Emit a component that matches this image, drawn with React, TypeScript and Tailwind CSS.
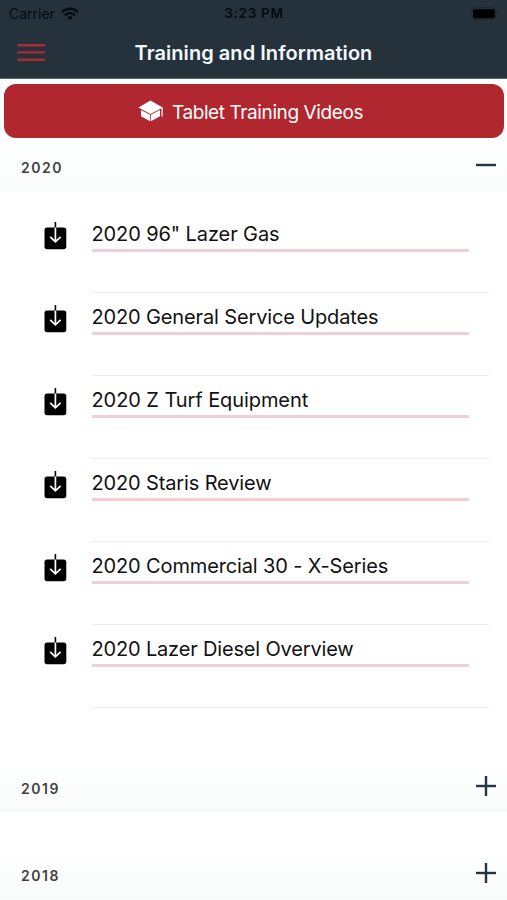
import React, { useState } from "react";

interface SectionProps {
  year: string;
  videos: { title: string; spacing: string }[];
}

const sections: SectionProps[] = [
  {
    year: "2020",
    videos: [
      { title: '2020 96" Lazer Gas', spacing: "tracking-[-0.1px]" },
      { title: "2020 General Service Updates", spacing: "tracking-[-0.14px]" },
      { title: "2020 Z Turf Equipment", spacing: "tracking-[-0.08px]" },
      { title: "2020 Staris Review", spacing: "tracking-[-0.14px]" },
      { title: "2020 Commercial 30 - X-Series", spacing: "tracking-[-0.14px]" },
      { title: "2020 Lazer Diesel Overview", spacing: "tracking-[-0.17px]" },
    ],
  },
  { year: "2019", videos: [] },
  { year: "2018", videos: [] },
];

const WifiIcon = () => (
  <svg width="18" height="14" viewBox="0 0 18 14" fill="none" stroke="#050b10">
    <path d="M1 5.1C5.6 0.7 12.4 0.7 17 5.1" strokeWidth="2.4" />
    <path d="M4 8.3C6.9 5.5 11.1 5.5 14 8.3" strokeWidth="2.3" />
    <path d="M9 13.2L6.2 10.4C7.8 9 10.2 9 11.8 10.4Z" fill="#050b10" stroke="none" />
  </svg>
);

const BatteryIcon = () => (
  <svg width="28" height="14" viewBox="0 0 28 14">
    <rect x="0.7" y="0.7" width="24.2" height="12" rx="3.2" fill="none" stroke="#1d2932" />
    <rect x="2" y="2.2" width="21.8" height="9" rx="1.8" fill="#000" />
    <path d="M26 4.6C27.6 5.3 27.6 8.1 26 8.8Z" fill="#1d2932" />
  </svg>
);

const MenuIcon = () => (
  <svg width="29" height="19" viewBox="0 0 29 19" stroke="#a92a34" strokeWidth="2.4" strokeLinecap="round">
    <path d="M1.2 2.2H27.2M1.2 9.4H27.2M1.2 16.7H27.2" />
  </svg>
);

const CapIcon = () => (
  <svg width="26" height="22" viewBox="0 0 26 22" fill="#fff">
    <path d="M12.5 0.6L0.5 7.6L12.5 14L23.5 8.2V16.4H24.7V7.6Z" />
    <path d="M3 9.9V16.2L12.1 21.2V14.8Z" />
    <path d="M12.9 14.8V21.2L22 16.2V9.9Z" />
  </svg>
);

const DownloadIcon = () => (
  <svg width="24" height="28" viewBox="0 0 24 28" fill="none">
    <rect x="0.5" y="5.4" width="21.8" height="21.8" rx="2.6" fill="#000" />
    <path d="M11.4 0V6" stroke="#000" strokeWidth="1.6" />
    <path d="M11.4 5.5V19.8M6.2 14.8L11.4 19.9L16.6 14.8" stroke="#fff" strokeWidth="1.7" />
  </svg>
);

const ToggleIcon = ({ open }: { open: boolean }) => (
  <svg width="20" height="20" viewBox="0 0 20 20" stroke="#233340" strokeWidth="2.4">
    <path d="M0 10H20" />
    {!open && <path d="M10 0V20" />}
  </svg>
);

const App = () => {
  const [openYear, setOpenYear] = useState("2020");

  return (
    <div className="flex h-[900px] w-[507px] flex-col overflow-hidden bg-white font-['Inter','Liberation_Sans',sans-serif]">
      <header className="h-[79px] shrink-0 border-b border-[#596973] bg-[#25323c]">
        <div className="grid h-[27px] grid-cols-3 items-center pr-[8px] pl-[9px] text-[13.5px] leading-none text-[#050b10]">
          <div className="flex items-center gap-[6px]">
            <span className="pt-px text-[14px]">Carrier</span>
            <WifiIcon />
          </div>
          <div className="pt-px text-center font-semibold tracking-[0.7px]">3:23 PM</div>
          <div className="flex justify-end">
            <BatteryIcon />
          </div>
        </div>
        <div className="grid h-[51px] grid-cols-[60px_1fr_60px] items-center">
          <button className="pl-[17px]">
            <MenuIcon />
          </button>
          <h1 className="text-center text-[20px] leading-none font-semibold tracking-[0.05px] whitespace-nowrap text-[#f2f8fc]">
            Training and Information
          </h1>
        </div>
      </header>

      <button className="mx-[3.5px] mt-[5px] flex h-[54px] shrink-0 items-center justify-center gap-[8px] rounded-[12px] bg-[#b1272f] pr-[6px] text-[19px] leading-none text-white">
        <CapIcon />
        <span className="pt-[2px] tracking-[-0.4px]">Tablet Training Videos</span>
      </button>

      {sections.map((section) => {
        const open = section.year === openYear;
        return (
          <section key={section.year} className="mb-[34px] shrink-0">
            <button
              onClick={() => setOpenYear(open ? "" : section.year)}
              className="flex h-[53px] w-full items-center justify-between bg-linear-to-b from-white to-[#f9fbfb] pr-[11px] pl-[21px]"
            >
              <span className="pt-[6px] text-[14px] leading-none font-semibold tracking-[1.5px] text-[#414141]">
                {section.year}
              </span>
              <ToggleIcon open={open} />
            </button>
            {open && (
              <ul className="pt-[19px] pb-[17px]">
                {section.videos.map((video) => (
                  <li key={video.title} className="flex h-[83px] pl-[44px]">
                    <div className="w-[48px] pt-[12px]">
                      <DownloadIcon />
                    </div>
                    <div className="w-[397px] border-b border-[#ececee]">
                      <div className="h-[42px] w-[377px] border-b-[3px] border-[#f0d0d6] pt-[14px]">
                        <span className={`-ml-[0.5px] block text-[20px] leading-[20px] whitespace-nowrap text-[#111] ${video.spacing}`}>
                          {video.title}
                        </span>
                      </div>
                    </div>
                  </li>
                ))}
              </ul>
            )}
          </section>
        );
      })}
    </div>
  );
};

export default App;
